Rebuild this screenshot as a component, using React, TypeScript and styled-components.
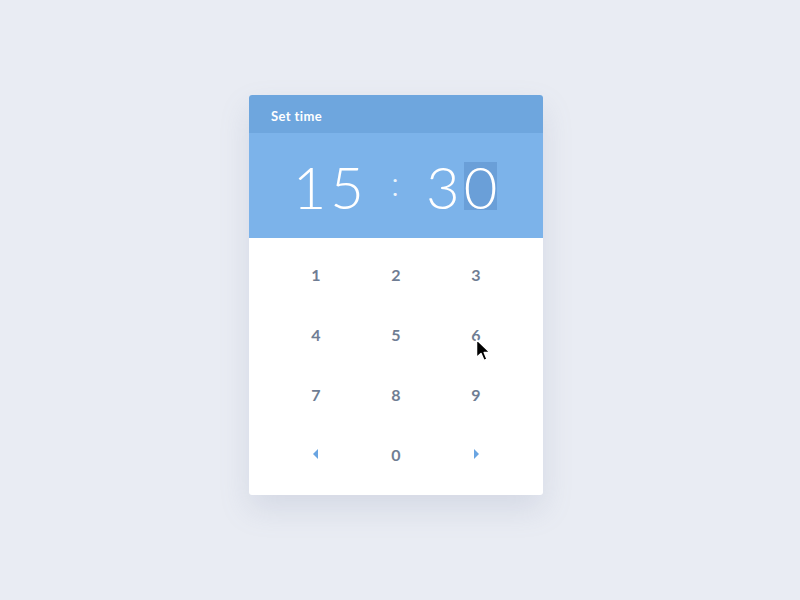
import styled, { createGlobalStyle } from "styled-components";

const GlobalStyle = createGlobalStyle`
	html, body {
		margin: 0;
		padding: 0;
		background: #e9ecf3;
		font-family: "Lato", "Open Sans", sans-serif;
	}
`;

const Page = styled.div`
	width: 800px;
	height: 600px;
	display: flex;
	justify-content: center;
	padding-top: 95px;
	box-sizing: border-box;
`;

const Card = styled.div`
	position: relative;
	width: 294px;
	height: 400px;
	margin-left: -8px;
	border-radius: 3px;
	overflow: hidden;
	background: #ffffff;
	box-shadow: 0 14px 30px rgba(120, 135, 165, 0.18);
	display: flex;
	flex-direction: column;
`;

const Header = styled.div`
	height: 38px;
	background: #6ea6de;
	color: #ffffff;
	font-size: 13px;
	font-weight: 700;
	letter-spacing: 0.4px;
	display: flex;
	align-items: center;
	padding-left: 22px;
	padding-top: 3px;
	box-sizing: border-box;
`;

const Display = styled.div`
	height: 105px;
	background: #7cb3ea;
	display: flex;
	align-items: center;
	justify-content: center;
	color: #ffffff;
	font-size: 58px;
	font-weight: 300;
	gap: 27px;
	padding-right: 2px;
`;

const Digits = styled.div`
	display: flex;
	gap: 4px;
`;

const Digit = styled.span<{ selected?: boolean }>`
	display: inline-block;
	background: ${(p) => (p.selected ? "#6a9fd8" : "transparent")};
	line-height: 46px;
	height: 46px;
	padding-top: 2px;
`;

const Colon = styled.span`
	font-size: 34px;
	padding-bottom: 6px;
	opacity: 0.85;
`;

const Keypad = styled.div`
	flex: 1;
	display: grid;
	grid-template-columns: repeat(3, 80px);
	grid-auto-rows: 60px;
	justify-content: center;
	padding-top: 6px;
`;

const Key = styled.button`
	border: none;
	background: none;
	font-family: "Lato", sans-serif;
	font-size: 16px;
	font-weight: 700;
	color: #6f7d93;
	display: flex;
	align-items: center;
	justify-content: center;
	cursor: pointer;
	padding: 0;
`;

const Cursor = styled.svg`
	position: absolute;
	left: 226px;
	top: 243px;
`;

const Arrow = ({ dir }: { dir: "left" | "right" }) => (
	<svg width="8" height="12" viewBox="0 0 8 12">
		{dir === "left" ? (
			<path d="M6 1 L1 6 L6 11 Z" fill="#6aa5e2" />
		) : (
			<path d="M2 1 L7 6 L2 11 Z" fill="#6aa5e2" />
		)}
	</svg>
);

const keys = ["1", "2", "3", "4", "5", "6", "7", "8", "9"];

export default function App() {
	return (
		<Page>
			<GlobalStyle />
			<Card>
				<Header>Set time</Header>
				<Display>
					<Digits>
						<Digit>1</Digit>
						<Digit>5</Digit>
					</Digits>
					<Colon>:</Colon>
					<Digits>
						<Digit>3</Digit>
						<Digit selected>0</Digit>
					</Digits>
				</Display>
				<Keypad>
					{keys.map((k) => (
						<Key key={k}>{k}</Key>
					))}
					<Key>
						<Arrow dir="left" />
					</Key>
					<Key>0</Key>
					<Key>
						<Arrow dir="right" />
					</Key>
				</Keypad>
				<Cursor width="18" height="26" viewBox="0 0 18 26">
					<path
						d="M1.5 1.5 L1.5 19.5 L6 15.5 L9 22.5 L12 21.2 L9.2 14.5 L15 14.5 Z"
						fill="#000"
						stroke="#fff"
						strokeWidth="1.5"
						strokeLinejoin="round"
					/>
				</Cursor>
			</Card>
		</Page>
	);
}
